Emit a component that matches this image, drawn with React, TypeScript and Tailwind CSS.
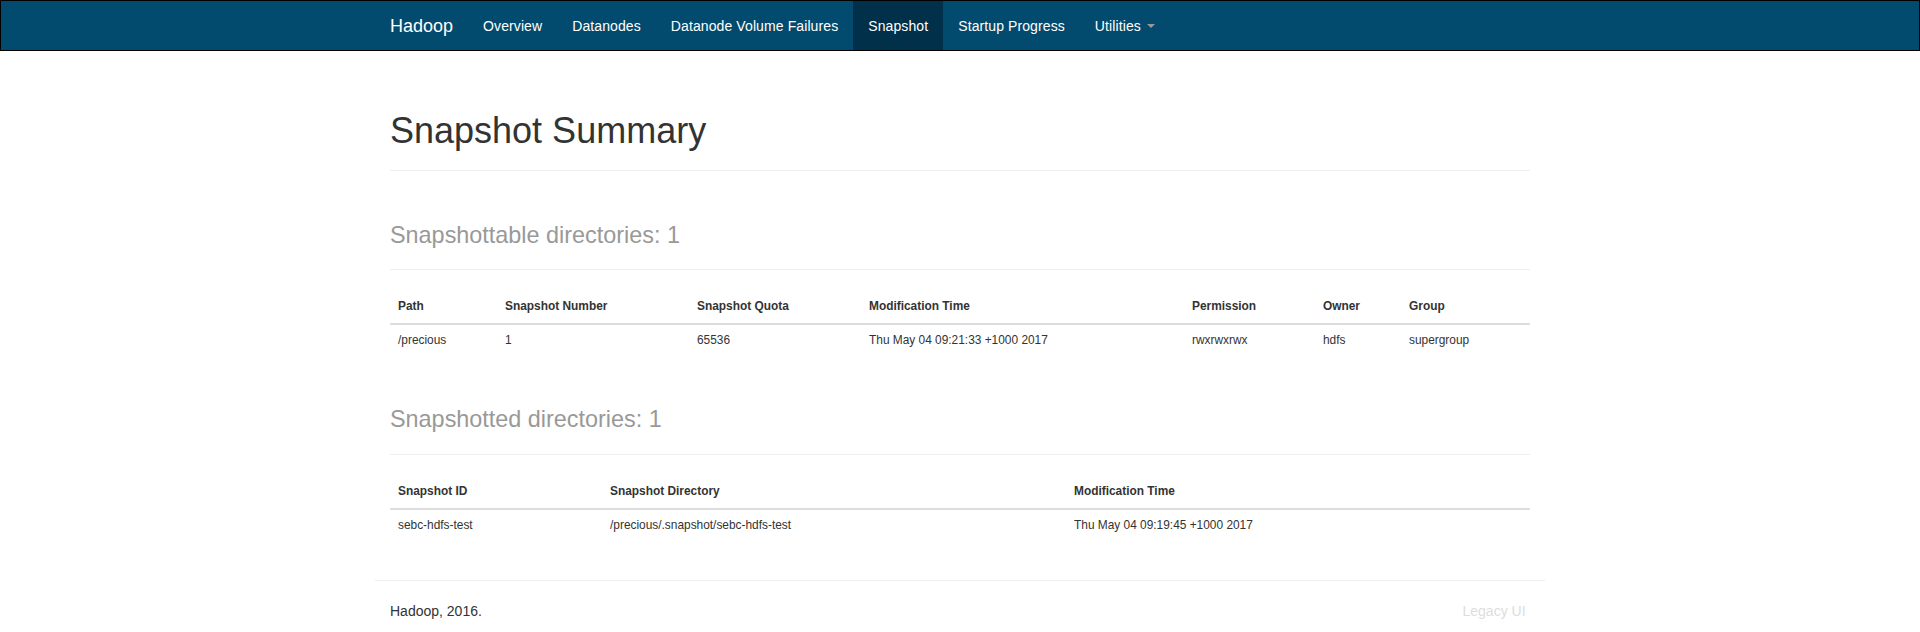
const navItems = [
  { label: 'Overview' },
  { label: 'Datanodes' },
  { label: 'Datanode Volume Failures' },
  { label: 'Snapshot', active: true },
  { label: 'Startup Progress' },
]

const snapshottable = {
  cols: [
    { name: 'Path', w: 'w-[107px]' },
    { name: 'Snapshot Number', w: 'w-[192px]' },
    { name: 'Snapshot Quota', w: 'w-[172px]' },
    { name: 'Modification Time', w: 'w-[323px]' },
    { name: 'Permission', w: 'w-[131px]' },
    { name: 'Owner', w: 'w-[86px]' },
    { name: 'Group', w: 'w-[129px]' },
  ],
  rows: [
    ['/precious', '1', '65536', 'Thu May 04 09:21:33 +1000 2017', 'rwxrwxrwx', 'hdfs', 'supergroup'],
  ],
}

const snapshotted = {
  cols: [
    { name: 'Snapshot ID', w: 'w-[212px]' },
    { name: 'Snapshot Directory', w: 'w-[464px]' },
    { name: 'Modification Time', w: 'w-[464px]' },
  ],
  rows: [['sebc-hdfs-test', '/precious/.snapshot/sebc-hdfs-test', 'Thu May 04 09:19:45 +1000 2017']],
}

function DataTable({ data }: { data: { cols: { name: string; w: string }[]; rows: string[][] } }) {
  return (
    <table className="w-full table-fixed border-collapse text-[11.9px] leading-[17px] mb-[20px]">
      <thead>
        <tr>
          {data.cols.map((c) => (
            <th
              key={c.name}
              className={`${c.w} text-left font-bold p-[8px] border-b-2 border-[#ddd] align-bottom`}
            >
              {c.name}
            </th>
          ))}
        </tr>
      </thead>
      <tbody>
        {data.rows.map((row, i) => (
          <tr key={i}>
            {row.map((cell, j) => (
              <td key={j} className="px-[8px] pt-[7px] pb-[6px] align-top">
                {cell}
              </td>
            ))}
          </tr>
        ))}
      </tbody>
    </table>
  )
}

function PageHeader({ children }: { children: React.ReactNode }) {
  return (
    <div className="mt-[40px] mb-[20px] pb-[9px] border-b border-[#eee]">
      <h1 className="text-[36px] leading-[1.1] font-normal mb-[10px]">{children}</h1>
    </div>
  )
}

export default function App() {
  return (
    <div
      className="min-h-[632px] bg-white text-[#333] text-[14px] leading-[20px]"
      style={{ fontFamily: '"Liberation Sans", Arial, Helvetica, sans-serif' }}
    >
      {/* Navbar */}
      <header className="h-[51px] bg-[#034b6e] border border-black">
        <div className="w-[1170px] mx-auto px-[15px] flex h-[49px]">
          <a className="-ml-[15px] px-[15px] flex items-center text-[18px] leading-[20px] text-white">
            Hadoop
          </a>
          <ul className="flex tracking-[0.1px]">
            {navItems.map((item) => (
              <li key={item.label}>
                <a
                  className={`h-full px-[15px] flex items-center text-white ${
                    item.active ? 'bg-[#00304a]' : ''
                  }`}
                >
                  {item.label}
                </a>
              </li>
            ))}
            <li>
              <a className="h-full px-[15px] flex items-center text-white">
                Utilities
                <span className="ml-[6px] mt-[1px] w-0 h-0 border-t-[4px] border-t-[#999] border-x-[4px] border-x-transparent" />
              </a>
            </li>
          </ul>
        </div>
      </header>

      <div className="w-[1170px] mx-auto px-[15px] pt-[20px]">
        <PageHeader>Snapshot Summary</PageHeader>

        <PageHeader>
          <span className="text-[23.4px] text-[#999]">Snapshottable directories: 1</span>
        </PageHeader>
        <DataTable data={snapshottable} />

        <PageHeader>
          <span className="text-[23.4px] text-[#999]">Snapshotted directories: 1</span>
        </PageHeader>
        <DataTable data={snapshotted} />

        {/* Footer */}
        <div className="-mx-[15px] mt-[40px] border-t border-[#eee] pt-[20px] flex justify-between">
          <p className="px-[15px] mb-[10px]">Hadoop, 2016.</p>
          <a className="w-[97.5px] px-[15px] text-[#ddd]">Legacy UI</a>
        </div>
      </div>
    </div>
  )
}
